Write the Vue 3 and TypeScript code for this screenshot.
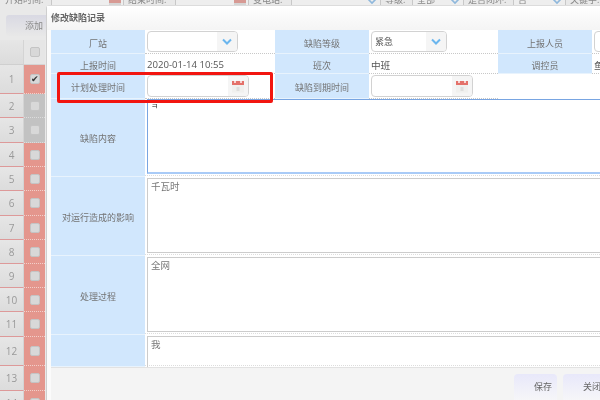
<script setup lang="ts">
const filters = [
  { label: "开始时间:", width: 123, labelWidth: 46, value: "", kind: "date" },
  { label: "结束时间:", width: 125, labelWidth: 47, value: "", kind: "date" },
  { label: "变电站:", width: 132, labelWidth: 38, value: "", kind: "select" },
  { label: "等级:", width: 83, labelWidth: 27, value: "全部", kind: "select" },
  { label: "是否闭环:", width: 102, labelWidth: 45, value: "否", kind: "select" },
  { label: "关键字:", width: 35, labelWidth: 35, value: "", kind: "none" },
];

const rows = [
  { n: 1, h: 29, checked: true, grey: false },
  { n: 2, h: 24, checked: false, grey: true },
  { n: 3, h: 25, checked: false, grey: true },
  { n: 4, h: 24, checked: false, grey: false },
  { n: 5, h: 24, checked: false, grey: false },
  { n: 6, h: 25, checked: false, grey: false },
  { n: 7, h: 24, checked: false, grey: false },
  { n: 8, h: 24, checked: false, grey: false },
  { n: 9, h: 24, checked: false, grey: false },
  { n: 10, h: 24, checked: false, grey: false },
  { n: 11, h: 25, checked: false, grey: false },
  { n: 12, h: 29, checked: false, grey: false },
  { n: 13, h: 25, checked: false, grey: false },
  { n: 14, h: 25, checked: false, grey: false },
];

const areas = [
  { label: "对运行造成的影响", text: "千瓦时", height: 79, last: false },
  { label: "处理过程", text: "全网", height: 79, last: false },
  { label: "", text: "我", height: 32, last: true },
];
</script>

<template>
  <div class="page">
    <!-- list behind the dialog -->
    <div class="filters">
      <div v-for="f in filters" :key="f.label" class="filter" :style="{ width: f.width + 'px' }">
        <span class="filter-label" :style="{ width: f.labelWidth + 'px' }">{{ f.label }}</span>
        <div v-if="f.kind !== 'none'" class="filter-box">
          <span>{{ f.value }}</span>
          <svg v-if="f.kind === 'select'" class="filter-icon" width="12" height="8" viewBox="0 0 12 8">
            <path d="M2 1l4 4 4-4" fill="none" stroke="#8fb8dc" stroke-width="1.6" />
          </svg>
          <svg v-else class="filter-icon" width="12" height="8" viewBox="0 0 12 8">
            <rect x="0" y="0" width="12" height="5" fill="#d79a94" />
            <rect x="0" y="5" width="12" height="3" fill="#d5d5d5" />
          </svg>
        </div>
      </div>
    </div>
    <div class="toolbar"><button class="add-btn">添加</button></div>
    <div class="head-row">
      <div class="num-cell"></div>
      <div class="check-cell head-check"><i class="check"></i></div>
    </div>
    <div v-for="r in rows" :key="r.n" class="row" :style="{ height: r.h + 'px' }">
      <div class="num-cell">{{ r.n }}</div>
      <div class="check-cell" :class="{ grey: r.grey }">
        <i class="check"><template v-if="r.checked">✔</template></i>
      </div>
    </div>

    <!-- dialog -->
    <div class="dialog">
      <div class="dialog-title">修改缺陷记录</div>
      <div class="form">
        <div class="label tall1">厂站</div>
        <div class="value tall1">
          <div class="select first-select">
            <span></span>
            <b><svg width="10" height="7" viewBox="0 0 10 7"><path d="M1 1.5L5 5.5l4-4" fill="none" stroke="#6bb6ee" stroke-width="2" /></svg></b>
          </div>
        </div>
        <div class="label tall1">缺陷等级</div>
        <div class="value tall1">
          <div class="select second-select">
            <span>紧急</span>
            <b><svg width="10" height="7" viewBox="0 0 10 7"><path d="M1 1.5L5 5.5l4-4" fill="none" stroke="#6bb6ee" stroke-width="2" /></svg></b>
          </div>
        </div>
        <div class="label tall1">上报人员</div>
        <div class="value tall1"><div class="select last-select"></div></div>

        <div class="label tall2">上报时间</div>
        <div class="value tall2 plain">2020-01-14 10:55</div>
        <div class="label tall2">班次</div>
        <div class="value tall2 plain">中班</div>
        <div class="label tall2">调控员</div>
        <div class="value tall2 plain">鱼</div>

        <div class="label tall3">计划处理时间</div>
        <div class="value tall3">
          <div class="date">
            <b>
              <svg width="12" height="13" viewBox="0 0 12 13">
                <rect x="0" y="1" width="12" height="11.5" fill="#f0f0ee" />
                <rect x="0" y="1" width="12" height="4" fill="#e4716a" />
                <path d="M3 0v3M9 0v3" stroke="#fff" stroke-width="1.4" />
                <path d="M4.5 8h3M4.5 10h3" stroke="#ccc" stroke-width="1" />
              </svg>
            </b>
          </div>
        </div>
        <div class="label tall3">缺陷到期时间</div>
        <div class="value tall3">
          <div class="date">
            <b>
              <svg width="12" height="13" viewBox="0 0 12 13">
                <rect x="0" y="1" width="12" height="11.5" fill="#f0f0ee" />
                <rect x="0" y="1" width="12" height="4" fill="#e4716a" />
                <path d="M3 0v3M9 0v3" stroke="#fff" stroke-width="1.4" />
                <path d="M4.5 8h3M4.5 10h3" stroke="#ccc" stroke-width="1" />
              </svg>
            </b>
          </div>
        </div>
        <div class="blank tall3"></div>

        <div class="label area-label first-area">缺陷内容</div>
        <div class="area-cell first-area focused-cell"><div class="area focused">ㅋ</div></div>

        <template v-for="a in areas" :key="a.text">
          <div class="label area-label" :style="{ height: a.height + 'px' }">{{ a.label }}</div>
          <div class="area-cell" :class="{ 'last-cell': a.last }" :style="{ height: a.height + 'px' }">
            <div class="area">{{ a.text }}</div>
          </div>
        </template>
      </div>
      <div class="dialog-foot">
        <button class="foot-btn">保存</button>
        <button class="foot-btn">关闭</button>
      </div>
    </div>

    <!-- red annotation box on the screenshot -->
    <div class="mark"></div>
  </div>
</template>

<style scoped>
.page {
  position: relative;
  width: 600px;
  height: 400px;
  overflow: hidden;
  background: #e9e9e9;
  color: #777;
  font-family: "Open Sans", "Noto Sans CJK SC", sans-serif;
  font-size: 9px;
  filter: blur(0.4px);
}

.filters {
  display: flex;
  align-items: flex-end;
  height: 6px;
  padding-left: 5px;
  overflow: hidden;
}

.filter {
  display: flex;
  flex: none;
  height: 12px;
  line-height: 12px;
  color: #888;
}

.filter-label {
  flex: none;
  white-space: nowrap;
}

.filter-box {
  display: flex;
  flex: 1;
  justify-content: space-between;
  align-items: flex-end;
  margin-right: 4px;
  padding: 0 2px 0 4px;
  border-left: 1px solid #c8c8c8;
  border-right: 1px solid #c8c8c8;
  background: #eee;
}

.filter-icon {
  flex: none;
}

.toolbar {
  height: 34px;
  padding: 9px 0 0 6px;
  box-sizing: border-box;
}

.add-btn {
  width: 60px;
  height: 21px;
  padding: 0 0 0 19px;
  border: 0;
  border-radius: 3px;
  background: linear-gradient(#d9d9e3, #e8e8e8);
  color: #888;
  font: inherit;
  text-align: left;
}

.head-row {
  display: flex;
  height: 25px;
}

.row {
  display: flex;
}

.num-cell {
  display: flex;
  align-items: center;
  justify-content: center;
  width: 23px;
  border-right: 1px solid #d4d4d4;
  border-bottom: 1px solid #d99;
  background: linear-gradient(#e6e6e6, #dcdcdc);
  color: #999;
  font-size: 10px;
}

.head-row .num-cell {
  border-bottom-color: #cfcfcf;
}

.check-cell {
  display: flex;
  align-items: center;
  justify-content: center;
  width: 21px;
  box-sizing: border-box;
  border-bottom: 1px dotted #f2d0cb;
  background: #e4968d;
}

.head-check {
  border-bottom: 1px solid #d4d4d4;
  background: #e6e6e6;
}

.check-cell.grey {
  border-bottom-color: #dcdcdc;
  background: #c2c2c2;
}

.check {
  display: block;
  box-sizing: border-box;
  width: 10px;
  height: 10px;
  border: 1px solid #c4c4c4;
  border-radius: 2px;
  background: #d8d8d8;
  color: #333;
  font-size: 9px;
  font-style: normal;
  line-height: 8px;
  text-align: center;
}

.dialog {
  position: absolute;
  top: 5px;
  left: 46px;
  width: 600px;
  height: 400px;
  box-sizing: border-box;
  border: 1px solid #dcdcdc;
  border-left-color: #cfcfcf;
  border-radius: 4px 0 0 0;
  background: #fbfbfb;
}

.dialog-title {
  height: 24px;
  padding: 3px 0 0 4px;
  box-sizing: border-box;
  background: linear-gradient(#fff, #f4f4f4);
  color: #666;
  font-size: 9px;
  font-weight: 700;
  line-height: 18px;
}

.form {
  display: grid;
  grid-template-columns: 94px 130px 94px 129px 94px 1fr;
  margin-left: 4px;
  background: #fff;
}

.tall1 { height: 24px; }
.tall2 { height: 20px; }
.tall3 { height: 25px; }
.first-area { height: 78px; }

.label {
  display: flex;
  align-items: center;
  justify-content: center;
  box-sizing: border-box;
  padding-top: 2px;
  border-bottom: 1px solid #e8f3fd;
  background: #d1e7fd;
  color: #737373;
  white-space: nowrap;
}

.label.tall1,
.label.tall2 {
  padding-top: 3px;
}

.value {
  display: flex;
  align-items: center;
  box-sizing: border-box;
  border-bottom: 1px dotted #c8c8c8;
  padding-left: 2px;
}

.plain {
  overflow: hidden;
  padding-top: 2px;
  color: #555;
  font-size: 9.6px;
  white-space: nowrap;
}

.blank {
  grid-column: span 2;
}

.select,
.date {
  display: flex;
  justify-content: flex-end;
  height: calc(100% - 2px);
  box-sizing: border-box;
  border: 1px solid #d2d2d2;
  border-radius: 4px;
  overflow: hidden;
  color: #555;
}

.first-select { width: 91px; }
.second-select { width: 76px; }
.last-select { width: 40px; }
.date { width: 102px; }

.select span {
  flex: 1;
  padding-left: 3px;
  line-height: 20px;
}

.select b,
.date b {
  display: flex;
  align-items: center;
  justify-content: center;
  flex: none;
  width: 20px;
  background: #f5f5f5;
}

.area-label {
  grid-column: 1;
}

.area-cell {
  grid-column: 2 / 7;
  box-sizing: border-box;
  padding: 1px 0 3px 2px;
  background: repeating-linear-gradient(90deg, #ddd 0 1px, #fff 1px 2px) left bottom 1px / 100% 1px no-repeat;
}

.focused-cell {
  padding-top: 0;
}

.last-cell {
  padding-bottom: 0;
}

.area {
  height: 100%;
  box-sizing: border-box;
  border: 1px solid #ccc;
  padding: 1px 3px;
  color: #777;
  font-family: "Liberation Serif", "Noto Sans CJK SC", serif;
  font-size: 9.5px;
  line-height: 14px;
}

.last-cell .area {
  border-bottom: 0;
}

.area.focused {
  border-color: #78a5e2;
  border-bottom: 2px solid #a9cbf7;
  color: #444;
  font-size: 8px;
  line-height: 12px;
}

.dialog-foot {
  display: flex;
  gap: 6px;
  height: 34px;
  margin-left: 4px;
  padding: 6px 0 0 463px;
  box-sizing: border-box;
  border-top: 1px solid #e2e2e2;
  background: #f4f4f4;
}

.foot-btn {
  flex: none;
  width: 43px;
  height: 30px;
  padding: 0 0 6px 20px;
  border: 0;
  border-radius: 4px;
  background: linear-gradient(#e8e8fa, #f8f8f8);
  color: #666;
  font: inherit;
  text-align: left;
  white-space: nowrap;
}

.mark {
  position: absolute;
  top: 72px;
  left: 57px;
  width: 216px;
  height: 31px;
  box-sizing: border-box;
  border: 3px solid #f21510;
  border-radius: 2px;
}
</style>

<style>
html,
body {
  margin: 0;
  background: #fff;
}
</style>
